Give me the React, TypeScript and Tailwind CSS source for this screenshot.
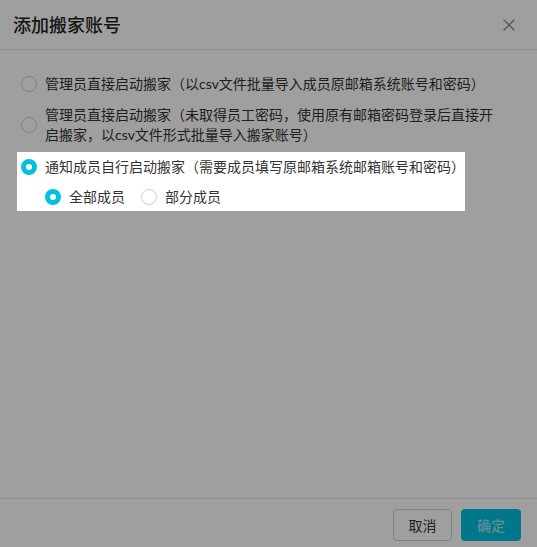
import React from "react";
import { X } from "lucide-react";

function Radio({ checked }: { checked?: boolean }) {
  return checked ? (
    <span className="box-border inline-block h-4 w-4 shrink-0 rounded-full border-[5px] border-[#00c1de] bg-white" />
  ) : (
    <span className="box-border inline-block h-4 w-4 shrink-0 rounded-full border border-[#d0d0d0] bg-white" />
  );
}

export default function App() {
  return (
    <div
      className="flex h-[547px] w-[537px] flex-col overflow-hidden bg-white text-[#333]"
      style={{ fontFamily: '"Lato", "Noto Sans CJK SC", sans-serif' }}
    >
      <div className="flex h-[50px] shrink-0 items-center justify-between border-b border-[#e4e4e4] pl-[13px] pr-[18px]">
        <div className="text-[18px] font-medium leading-[24px] text-[#222]">添加搬家账号</div>
        <X size={20} strokeWidth={1.5} className="text-[#888]" />
      </div>

      <div className="flex flex-1 flex-col pt-[24px] pl-[17px]">
        <label className="flex items-center gap-2 pl-1 text-[14px] leading-[20px]">
          <Radio />
          <span>管理员直接启动搬家（以csv文件批量导入成员原邮箱系统账号和密码）</span>
        </label>
        <label className="mt-[11px] flex items-center gap-2 pl-1 text-[14px] leading-[20px]">
          <Radio />
          <span className="w-[452px]">
            管理员直接启动搬家（未取得员工密码，使用原有邮箱密码登录后直接开启搬家，以csv文件形式批量导入搬家账号）
          </span>
        </label>
        <div className="relative z-10 mt-[7px] w-[448px] bg-white pt-[5px] pb-[4px] pl-1 shadow-[0_0_0_9999px_rgba(0,0,0,0.375)]">
          <label className="flex items-center gap-2 text-[14px] leading-[20px]">
            <Radio checked />
            <span className="whitespace-nowrap">通知成员自行启动搬家（需要成员填写原邮箱系统邮箱账号和密码）</span>
          </label>
          <div className="mt-[10px] flex items-center pl-[24px] text-[14px] leading-[20px]">
            <label className="flex items-center gap-2">
              <Radio checked />
              <span>全部成员</span>
            </label>
            <label className="ml-4 flex items-center gap-2">
              <Radio />
              <span>部分成员</span>
            </label>
          </div>
        </div>
      </div>

      <div className="flex shrink-0 justify-end gap-[9px] border-t border-[#e4e4e4] pt-[10px] pr-[16px] pb-[6px]">
        <button className="h-[32px] w-[59px] rounded-[4px] border border-[#d0d0d0] bg-white text-[14px] text-[#333]">
          取消
        </button>
        <button className="h-[32px] w-[60px] rounded-[4px] bg-[#00c1de] text-[14px] font-medium text-white/60">
          确定
        </button>
      </div>
    </div>
  );
}
